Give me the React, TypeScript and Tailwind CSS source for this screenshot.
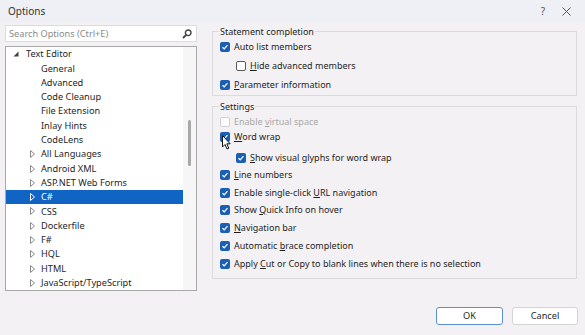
import type { ReactNode } from 'react';

const font = { fontFamily: '"Segoe UI", "Noto Sans", sans-serif' };

type TreeItem = { label: string; level: 0 | 1; arrow?: 'open' | 'closed'; selected?: boolean };

const treeItems: TreeItem[] = [
  { label: 'Text Editor', level: 0, arrow: 'open' },
  { label: 'General', level: 1 },
  { label: 'Advanced', level: 1 },
  { label: 'Code Cleanup', level: 1 },
  { label: 'File Extension', level: 1 },
  { label: 'Inlay Hints', level: 1 },
  { label: 'CodeLens', level: 1 },
  { label: 'All Languages', level: 1, arrow: 'closed' },
  { label: 'Android XML', level: 1, arrow: 'closed' },
  { label: 'ASP.NET Web Forms', level: 1, arrow: 'closed' },
  { label: 'C#', level: 1, arrow: 'closed', selected: true },
  { label: 'CSS', level: 1, arrow: 'closed' },
  { label: 'Dockerfile', level: 1, arrow: 'closed' },
  { label: 'F#', level: 1, arrow: 'closed' },
  { label: 'HQL', level: 1, arrow: 'closed' },
  { label: 'HTML', level: 1, arrow: 'closed' },
  { label: 'JavaScript/TypeScript', level: 1, arrow: 'closed' },
];

function Arrow({ kind, light }: { kind: 'open' | 'closed'; light?: boolean }) {
  if (kind === 'open') {
    return (
      <svg width="6" height="6" viewBox="0 0 6 6">
        <path d="M5.5 0.5 L5.5 5.5 L0.5 5.5 Z" fill="#404040" />
      </svg>
    );
  }
  return (
    <svg width="5" height="8" viewBox="0 0 5 8">
      <path d="M0.5 0.5 L4.5 4 L0.5 7.5 Z" fill="none" stroke={light ? '#ffffff' : '#8a8a8a'} strokeWidth="1" />
    </svg>
  );
}

function Check({ checked, disabled }: { checked?: boolean; disabled?: boolean }) {
  if (!checked) {
    return (
      <span
        className={`w-[10px] h-[10px] rounded-[2px] border bg-white shrink-0 ${
          disabled ? 'border-[#d0d0d0]' : 'border-[#5a5a5a]'
        }`}
      />
    );
  }
  return (
    <span className="w-[10px] h-[10px] rounded-[2px] bg-[#1a5fb4] shrink-0 flex items-center justify-center">
      <svg width="8" height="8" viewBox="0 0 8 8">
        <path d="M1.5 4.2 L3.2 5.8 L6.5 2.2" fill="none" stroke="#fff" strokeWidth="1.2" />
      </svg>
    </span>
  );
}

function Option({
  children,
  checked,
  disabled,
  indent,
  className,
}: {
  children: ReactNode;
  checked?: boolean;
  disabled?: boolean;
  indent?: boolean;
  className: string;
}) {
  return (
    <div className={`flex items-center gap-[4px] ${className} ${indent ? 'pl-[17px]' : 'pl-[1px]'}`}>
      <Check checked={checked} disabled={disabled} />
      <span className={`whitespace-nowrap ${disabled ? 'text-[#a8a8a8]' : 'text-[#1f1f1f]'}`}>{children}</span>
    </div>
  );
}

const U = ({ children }: { children: ReactNode }) => <span className="underline underline-offset-1">{children}</span>;

export default function App() {
  return (
    <div className="w-[585px] h-[335px] bg-[#f3f1f3] flex flex-col text-[9.2px] relative overflow-hidden" style={font}>
      {/* Title bar */}
      <div className="h-[22px] bg-[#eef0f5] flex items-center pl-[8px] text-[#333] text-[10px]">
        <span className="flex-1">Options</span>
        <span className="w-[10px] text-center text-[#555]">?</span>
        <span className="w-[37px] flex justify-center">
          <svg width="9" height="9" viewBox="0 0 9 9">
            <path d="M0.5 0.5 L8.5 8.5 M8.5 0.5 L0.5 8.5" stroke="#555" strokeWidth="1" />
          </svg>
        </span>
      </div>

      <div className="flex flex-1">
        {/* Left column */}
        <div className="w-[192px] ml-[5px] mt-[3px] flex flex-col">
          <div className="h-[17px] bg-white border border-[#dcdcdc] flex items-center pl-[3px] pr-[4px]">
            <span className="flex-1 text-[#8a8a8a]">Search Options (Ctrl+E)</span>
            <svg width="10" height="10" viewBox="0 0 10 10">
              <circle cx="6.2" cy="3.8" r="2.8" fill="none" stroke="#444" strokeWidth="1.4" />
              <path d="M4.2 5.8 L1 9" stroke="#444" strokeWidth="1.8" />
            </svg>
          </div>
          <div className="mt-[4px] h-[245px] bg-white border border-[#a9a9a9] flex overflow-hidden">
            <div className="flex-1">
              {treeItems.map((item) => (
                <div
                  key={item.label}
                  className={`h-[14.3px] flex items-center ${
                    item.selected ? 'bg-[#0f64c4] text-white' : 'text-[#1f1f1f]'
                  }`}
                >
                  <span
                    className={`flex items-center justify-center w-[8px] ${
                      item.level === 0 ? 'ml-[6px] mr-[6px]' : 'ml-[22px] mr-[5px]'
                    }`}
                  >
                    {item.arrow && <Arrow kind={item.arrow} light={item.selected} />}
                  </span>
                  <span className="whitespace-nowrap">{item.label}</span>
                </div>
              ))}
            </div>
            <div className="w-[13px] bg-[#f6f6f6] flex justify-center">
              <div className="w-[3px] h-[46px] mt-[73px] rounded-full bg-[#a8a8a8]" />
            </div>
          </div>
        </div>

        {/* Right column */}
        <div className="flex-1 ml-[15px] mr-[8px] flex flex-col text-[9px]">
          <fieldset className="border border-[#dcdadc] px-[6px] pb-[1px] mt-[4px]">
            <legend className="px-[1px] text-[#1f1f1f] leading-[11px]">Statement completion</legend>
            <Option checked className="h-[19px]">Auto list members</Option>
            <Option indent className="h-[19px]">
              <U>H</U>ide advanced members
            </Option>
            <Option checked className="h-[19px]">
              <U>P</U>arameter information
            </Option>
          </fieldset>

          <fieldset className="border border-[#dcdadc] px-[6px] pb-[6px] mt-[5px]">
            <legend className="px-[1px] text-[#1f1f1f] leading-[11px]">Settings</legend>
            <Option disabled className="h-[15px] mt-[2px]">
              Enable <U>v</U>irtual space
            </Option>
            <Option checked className="h-[15px]">
              <U>W</U>ord wrap
            </Option>
            <Option checked indent className="h-[16px] mt-[5.5px]">
              <U>S</U>how visual glyphs for word wrap
            </Option>
            <Option checked className="h-[16px] mt-[1px]">
              <U>L</U>ine numbers
            </Option>
            <Option checked className="h-[16px] mt-[2px]">
              Enable single-click <U>U</U>RL navigation
            </Option>
            <Option checked className="h-[16px] mt-[1px]">
              Show <U>Q</U>uick Info on hover
            </Option>
            <Option checked className="h-[16px] mt-[2px]">
              <U>N</U>avigation bar
            </Option>
            <Option checked className="h-[16px] mt-[2px]">
              Automatic <U>b</U>race completion
            </Option>
            <Option checked className="h-[16px] mt-[2px]">
              Apply <U>C</U>ut or Copy to blank lines when there is no selection
            </Option>
          </fieldset>
        </div>
      </div>

      {/* Buttons */}
      <div className="h-[28px] flex justify-end items-start gap-[9px] pr-[7px] pb-[10px] text-[#1f1f1f]">
        <button className="w-[67px] h-[18px] bg-white border border-[#5b8fd0] rounded-[3px] leading-none">OK</button>
        <button className="w-[66px] h-[18px] bg-white border border-[#d4d4d4] rounded-[3px] leading-none">Cancel</button>
      </div>

      {/* Mouse pointer */}
      <svg className="absolute left-[222px] top-[135px]" width="9" height="15" viewBox="0 0 9 15">
        <path d="M0.5 0.5 L0.5 12 L3 9.5 L5 14 L6.8 13.2 L4.8 8.8 L8.2 8.8 Z" fill="#fff" stroke="#111" strokeWidth="1" />
      </svg>
    </div>
  );
}
